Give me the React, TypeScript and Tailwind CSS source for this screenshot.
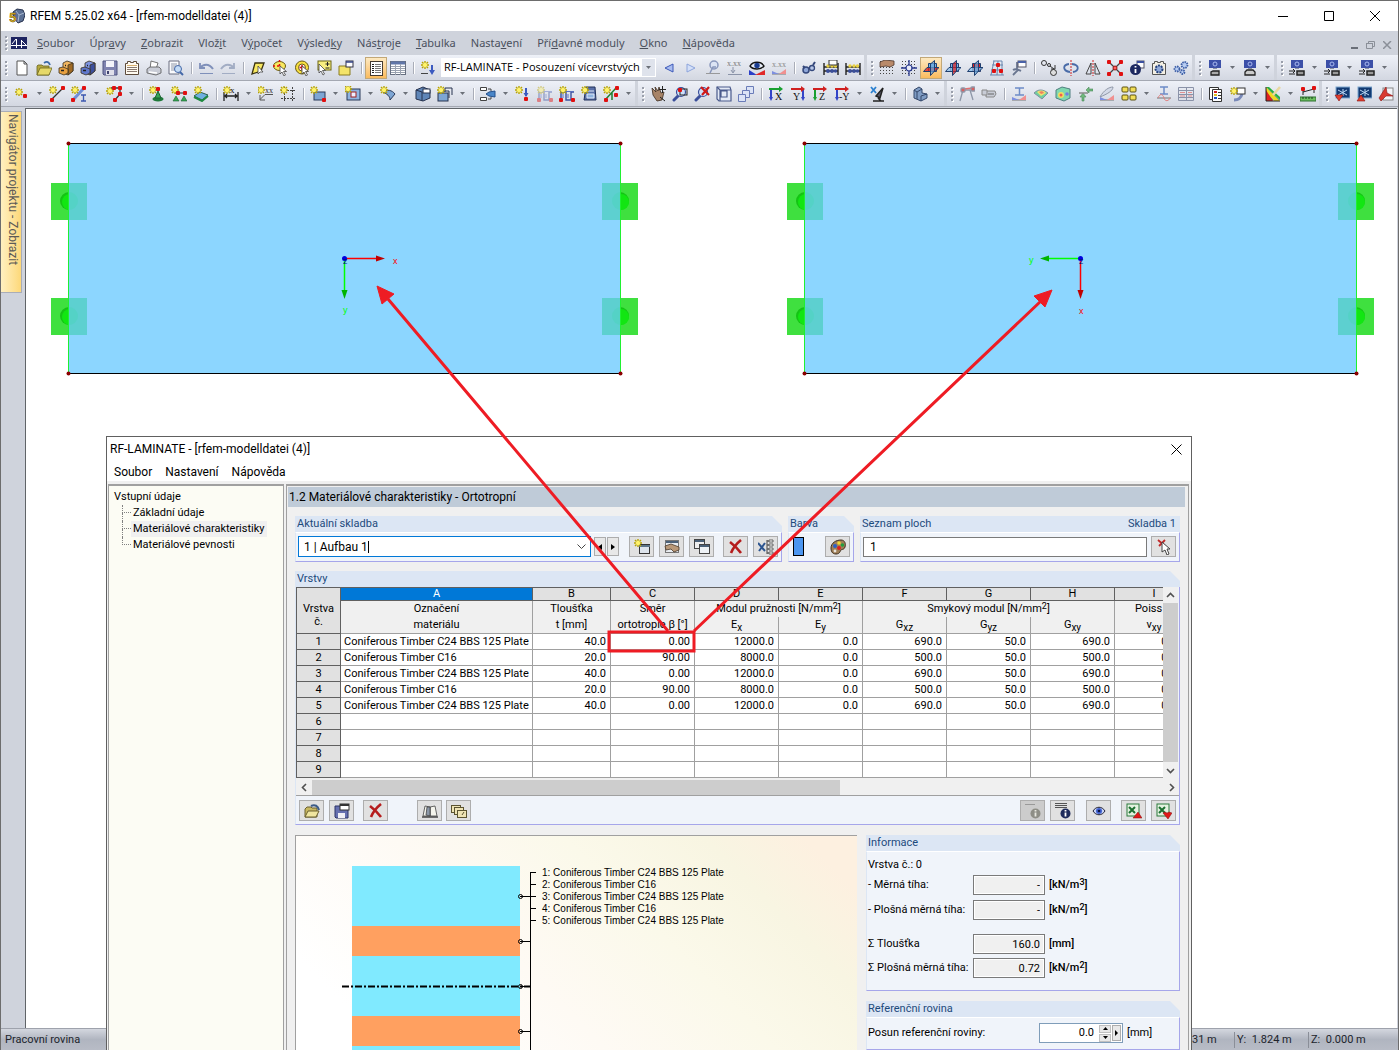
import { Fragment, type ReactNode } from "react";
import clsx from "clsx";

const dot = (x: number, y: number, c = "#e01010") => (
  <rect key={`${x}-${y}`} x={x - 2} y={y - 2} width="4" height="4" rx="1" fill={c} />
);
const star = (x = 4, y = 4) => (
  <g>
    <path
      d={`M${x} ${y - 4}v8M${x - 4} ${y}h8M${x - 3} ${y - 3}l6 6M${x + 3} ${y - 3}l-6 6`}
      stroke="#b8a400"
      strokeWidth="1.400"
    />
    <circle cx={x} cy={y} r="2.200" fill="#fff36a" />
  </g>
);
const cursor = <path d="M8 6v8l2-2 2 4 1.500-1-2-3.500h3z" fill="#fff" stroke="#444" strokeWidth=".8" />;
const txt = (x: number, y: number, s: string, c = "#333", size = 8) => (
  <text x={x} y={y} fontSize={size} fill={c} fontFamily="Liberation Serif, serif">
    {s}
  </text>
);
const xbeam = (
  <g stroke="#b9bcc4" strokeWidth="1">
    <path d="M1 14h14" stroke="#777" />
    <path d="M1 14v-3l7 3z" fill="#7d8fe0" stroke="none" />
    <path d="M15 14v-5l-7 5z" fill="#f09090" stroke="none" />
  </g>
);
const camera = (
  <g>
    <rect x="2" y="0" width="12" height="8" fill="#3c50a8" />
    <circle cx="8" cy="4" r="2" fill="none" stroke="#a9b9f0" />
    <path d="M6 8h4v1H6z" fill="#8a90a0" />
  </g>
);
const abacus = (
  <g>
    <path d="M1 3v12M15 3v12M1 7h14M1 11h14" stroke="#222" fill="none" strokeWidth="1.400" />
    <g fill="#3b4f9a">
      <circle cx="5" cy="11" r="2" />
      <circle cx="9" cy="11" r="2" />
      <circle cx="12.500" cy="11" r="1.800" />
    </g>
    <g fill="#e8d040">
      <circle cx="5" cy="6" r="1.700" />
      <circle cx="9" cy="6" r="1.700" />
      <circle cx="12.500" cy="6" r="1.700" />
    </g>
  </g>
);
const grid = (
  <path
    d="M1 1.500h15M1 4.500h15M1 7.500h15M1 10.500h15M1 13.500h15"
    stroke="#444"
    strokeDasharray="1 2"
    strokeWidth="1"
  />
);
// three crossing work planes, the active one in red
const plane = (active: "xy" | "yz" | "xz") => (
  <g strokeWidth="1" stroke="#1f3f70">
    <path d="M5.500 3.500h8v8h-8z" fill={active === "xz" ? "#e02020" : "#7ab4ea"} />
    <path d="M4 7.500h12l-4 4H.5z" fill={active === "xy" ? "#e02020" : "#8fc0ea"} fillOpacity=".8" />
    <path d="M7.500 4l4-3.500V11l-4 4.500z" fill={active === "yz" ? "#e02020" : "#6aa6dc"} fillOpacity=".7" />
  </g>
);
const cabinet = (a: string, b: string, c: string) => (
  <g stroke="#3a3020" strokeWidth=".8">
    <path d="M5 3l4-2 6 2v8l-5 4-5-2z" fill={a} />
    <path d="M10 5l5-2v8l-5 4z" fill={b} />
    <path d="M1 8l4-1 5 2v4l-4 2-5-2z" fill={c} />
    <path d="M3 10.500h3M7 5.500h1" stroke="#222" strokeWidth="1.400" />
  </g>
);
const axes = (h: string, v: string, label: string, flip = false) => (
  <g>
    <path d={flip ? "M13 3v10" : "M3 3v10"} stroke={v} strokeWidth="2" />
    <path d={flip ? "M11 11h4l-2 4z" : "M1 11h4l-2 4z"} fill={v} />
    <path d="M1 3h11" stroke={h} strokeWidth="2" />
    <path d="M11 0l4 3-4 3z" fill={h} />
    {txt(flip ? 3 : label.length > 1 ? 5 : 7, 14, label, "#111", 10)}
  </g>
);
const lens = (
  <g>
    <path d="M7 9l-5 5" stroke="#3b4f9a" strokeWidth="3" strokeLinecap="round" />
    <circle cx="9" cy="6" r="4.500" fill="#cfe0fa" stroke="#3b4f9a" strokeWidth="1.200" />
  </g>
);
const screenArrow = (d: string) => (
  <g>
    <rect x="2" y="1" width="14" height="11" fill="#123a72" stroke="#7fa8d0" />
    <path d="M4 4l9 5M13 4l-9 5M9 3v7" stroke="#bcd8f4" strokeWidth="1" />
    <path d={d} fill="#e04030" stroke="#8c1010" strokeWidth=".6" />
  </g>
);
const frame = (
  <g>
    <path d="M2 14V6h5v8h5V6h3" stroke="#3b50a0" strokeWidth="1.400" fill="none" />
    <path d="M1 5.500h14M4 8v4M9 8v4" stroke="#5a70c0" />
    {dot(2, 14)}
    {dot(14, 14)}
  </g>
);

const icons: Record<string, ReactNode> = {
  new: <path d="M3 1h7l3 3v11H3zM10 1v3h3" fill="#fff" stroke="#555" />,
  open: (
    <g stroke="#6b6420" strokeWidth=".8">
      <path d="M1 6l1-1h4l1 1h6v9H1z" fill="#b5a840" />
      <path d="M1 15l3-7h12l-3 7z" fill="#e6d96a" />
      <path d="M8 3c3-2 5-1 6 2" fill="none" stroke="#3b6aa8" strokeWidth="1.800" />
    </g>
  ),
  block: cabinet("#f0b560", "#a06a24", "#e8a040"),
  blockSave: cabinet("#7d94e0", "#3c4f9c", "#6078cc"),
  save: (
    <g>
      <path d="M1 1h14v14H2l-1-1z" fill="#8084b0" stroke="#505480" />
      <rect x="4" y="1" width="8" height="6" fill="#f4f4fa" />
      <rect x="4" y="10" width="8" height="5" fill="#e0e0ea" />
      <rect x="5" y="11" width="2" height="3" fill="#404470" />
    </g>
  ),
  print: (
    <g stroke="#555" strokeWidth=".8">
      <path d="M5 1l7 2-2 6H4z" fill="#fff" />
      <path d="M1 9l3-2h9l2 2v4l-5 2-9-2z" fill="#c9ccd6" />
      <path d="M3 12l8 1" stroke="#fff" strokeWidth="1.500" />
    </g>
  ),
  report: (
    <g>
      <path d="M1.500 3.500h2v-2h3v1h3v-1h3v2h2v11h-13z" fill="#fffaf0" stroke="#5c4a3a" />
      <path d="M3 5.500h10" stroke="#d8b070" />
      <path d="M3 7.500h10M3 9.500h10M3 11.500h10" stroke="#8a7a70" />
    </g>
  ),
  preview: (
    <g>
      <path d="M1 1h10v13H1z" fill="#fafbfd" stroke="#6a6f80" />
      <path d="M3 4h6M3 6h6M3 8h4M3 10h4" stroke="#9098a8" />
      <circle cx="10" cy="9" r="3.500" fill="#c4dcf6" stroke="#4468a8" />
      <path d="M12 12l3 3" stroke="#4468a8" strokeWidth="2" />
    </g>
  ),
  undo: (
    <g fill="none" stroke="#7f90ba">
      <path d="M2 3v5h5" strokeWidth="1.800" />
      <path d="M2 8c3-4 9-5 13 1" strokeWidth="2" />
      <path d="M2 13.500h13" />
    </g>
  ),
  redo: (
    <g fill="none" stroke="#a2adc4">
      <path d="M14 3v5H9" strokeWidth="1.800" />
      <path d="M14 8C11 4 5 3 1 9" strokeWidth="2" />
      <path d="M2 13.500h13" />
    </g>
  ),
  selPoly: (
    <g>
      <path d="M5 3h9l-3 8-9 3z" fill="#f8e860" stroke="#3a3210" strokeWidth="1.300" />
      <path d="M8 6v8l2-2h3z" fill="#fff" stroke="#444" strokeWidth=".8" />
    </g>
  ),
  selCircle: (
    <g>
      <ellipse cx="7.500" cy="6" rx="6" ry="4.500" fill="#f8e860" stroke="#6b5a10" />
      <path d="M7.500 0v8M1 6h8" stroke="#e01010" strokeWidth="1.500" strokeDasharray="2 2" />
      {cursor}
    </g>
  ),
  selRing: (
    <g>
      <circle cx="8" cy="7.500" r="6.500" fill="#f8e040" stroke="#6b5a10" />
      <circle cx="8" cy="7.500" r="3.500" fill="#fff" stroke="#6b5a10" />
      <path d="M8 5v5M5.500 7.500h5" stroke="#e01010" strokeWidth="1.500" />
      {cursor}
    </g>
  ),
  selPlus: (
    <g>
      <rect x="2" y="1" width="13" height="9" fill="#f8ee80" stroke="#6b6410" />
      <path d="M11.500 2v4M9.500 4h4M9.500 8h4" stroke="#222" />
      <path d="M3 4v9l2-2 2 4 1.500-1-2-3.500h3z" fill="#fff" stroke="#444" strokeWidth=".8" />
    </g>
  ),
  selWindow: (
    <g>
      <path d="M1 6h11v9H1z" fill="#f4e46a" stroke="#8a7c20" />
      <rect x="8" y="1" width="7" height="6" fill="#fff" stroke="#334" />
      <path d="M8 2h7" stroke="#334488" strokeWidth="1.500" />
    </g>
  ),
  navigator: (
    <g>
      <rect x="2.500" y="1.500" width="12" height="14" fill="#fff" stroke="#443a30" />
      <path d="M4 4.500h2M4 6.500h2M4 8.500h2M4 10.500h2M4 12.500h2" stroke="#222" />
      <path d="M7 4.500h6M7 6.500h6M7 8.500h6M7 10.500h6M7 12.500h6" stroke="#777" />
    </g>
  ),
  tables: (
    <g>
      <rect x=".5" y="1.500" width="15" height="13" fill="#fff" stroke="#666f80" />
      <path d="M1 3h14" stroke="#6076a8" strokeWidth="3" />
      <path d="M1 6.500h14M1 8.500h14M1 10.500h14M1 12.500h14M5.500 4v11M10.500 4v11" stroke="#9aa2b0" />
    </g>
  ),
  newLoad: (
    <g>
      {star(5, 5)}
      <path d="M12 5v7" stroke="#3b5ac0" strokeWidth="2" />
      <path d="M9 10h6l-3 5z" fill="#3b5ac0" />
      <path d="M1 13.500h7" stroke="#444" />
    </g>
  ),
  prev: <path d="M12 4v8L4 8z" fill="#a9bdf0" stroke="#3c58b8" />,
  next: <path d="M4 4v8l8-4z" fill="#d4e0f8" stroke="#8ca4dc" />,
  pin: (
    <g opacity=".8">
      <circle cx="9" cy="5" r="4" fill="#dbe4f6" stroke="#7384b0" strokeWidth="1.500" />
      <path d="M5 13l3-6h3" stroke="#7384b0" strokeWidth="1.500" fill="none" />
      <path d="M1 13.500h14" stroke="#888" />
    </g>
  ),
  values: (
    <g>
      {txt(0, 6, "x.xx", "#777", 8)}
      <path d="M6 7v5M1 14.500h14M4 10l2 3 2-3" stroke="#8a93a8" fill="none" />
    </g>
  ),
  eye: (
    <g>
      <path d="M0 15v-5l8 5z" fill="#2b3fc8" />
      <path d="M16 10v5H6z" fill="#e02828" />
      <path d="M1 6c3-5 11-5 14 0-3 4-11 4-14 0z" fill="#e6ecf8" stroke="#111" strokeWidth="1.400" />
      <circle cx="8" cy="5.500" r="2.700" fill="#1a3c90" />
    </g>
  ),
  valuesX: (
    <g>
      {xbeam}
      {txt(1, 7, "x.xx", "#888", 8)}
    </g>
  ),
  tool: (
    <g fill="none" stroke="#34487c">
      <circle cx="5" cy="10" r="3" fill="#8ea6d8" strokeWidth="1.500" />
      <circle cx="11" cy="8" r="2.500" fill="#b6c6e8" strokeWidth="1.300" />
      <path d="M2 6l2 2M12 5l2-3" strokeWidth="2" />
    </g>
  ),
  abacusWin: (
    <g>
      {abacus}
      <rect x="6" y="0" width="8" height="5" fill="#fff" stroke="#333" />
    </g>
  ),
  abacus,
  gridHand: (
    <g>
      {grid}
      <path d="M1 2l5-2 9 1v4l-4 2-4-1-6 1z" fill="#b98a6a" stroke="#4a3428" strokeWidth=".8" />
    </g>
  ),
  gridAxis: (
    <g>
      {grid}
      <path d="M8 0v16M0 8h16" stroke="#2a3a90" strokeWidth="1.300" />
      <circle cx="8" cy="8" r="3" fill="#e8ecf8" stroke="#2a3a90" strokeWidth="1.200" />
    </g>
  ),
  planeA: plane("xy"),
  planeB: plane("yz"),
  planeC: plane("xz"),
  mesh: (
    <g>
      <path d="M4 1h9M3 5h11M2 10h12M1 15h14M5 1L2 15M9 1L8 15M13 1v14" stroke="#6a88b0" fill="none" />
      {dot(9, 5)}
      {dot(5, 11)}
      {dot(12, 11)}
    </g>
  ),
  wrenchWin: (
    <g>
      <path d="M2 15l5-5M2 10c3-2 6 0 8 1M6 2v7" stroke="#6a7690" strokeWidth="1.800" fill="none" />
      <rect x="7" y="1" width="8" height="6" fill="#fff" stroke="#556" />
      <path d="M7 2h8" stroke="#4a62a8" strokeWidth="2" />
    </g>
  ),
  copyMove: (
    <g fill="none" stroke="#333">
      <circle cx="3" cy="3" r="2.500" />
      <circle cx="12.500" cy="12.500" r="3" fill="#ddd" />
      <circle cx="8" cy="5" r="1.500" />
      <path d="M9 6l4 3M14 5v4h-4" />
    </g>
  ),
  rotate: (
    <g fill="none" stroke="#4a6ca8" strokeWidth="1.800">
      <path d="M6 4C-1 5 0 11 7 12M9 4c8 1 7 7 1 8" />
      <path d="M8 0v16" stroke="#d02020" strokeDasharray="2 1" strokeWidth="1" />
    </g>
  ),
  mirror: (
    <g fill="#dfe4ee" stroke="#444">
      <path d="M6 3v11H1zM10 3v11h5z" />
      <path d="M8 0v16" stroke="#d02020" strokeDasharray="2 1" />
    </g>
  ),
  explode: (
    <g>
      <path d="M2 2l12 12M14 2L2 14" stroke="#444" strokeWidth="1.300" />
      {[dot(2, 2), dot(14, 2), dot(2, 14), dot(14, 14)]}
      <circle cx="8" cy="8" r="2" fill="#ff6060" stroke="#a01010" />
    </g>
  ),
  info: (
    <g>
      <rect x="8" y="1" width="7" height="7" fill="#fff" stroke="#556" />
      <path d="M8 2h7" stroke="#3b50a0" strokeWidth="2" />
      <circle cx="6.500" cy="9.500" r="5.500" fill="#1c2860" />
      <path d="M6.500 6v1.500M6.500 9v4" stroke="#fff" strokeWidth="1.800" />
    </g>
  ),
  settings: (
    <g>
      <path d="M1.500 3.500h2v-2h3v1h3v-1h3v2h2v11h-13z" fill="#f4f0e4" stroke="#555" />
      <circle cx="8" cy="9" r="3.500" fill="#8fa8d8" stroke="#24407c" strokeWidth="2" strokeDasharray="2 1" />
    </g>
  ),
  gears: (
    <g fill="#b8cdf2" stroke="#3e5fa6" strokeWidth="1.800" strokeDasharray="1.500 .8">
      <circle cx="4" cy="9" r="2.500" />
      <circle cx="11.500" cy="5" r="3" />
      <circle cx="9.500" cy="12" r="2" />
    </g>
  ),
  camA: (
    <g>
      {camera}
      <path d="M4 15v-3l2-1h6v4z" fill="#aaa" stroke="#222" strokeWidth="1.300" />
    </g>
  ),
  camB: (
    <g>
      {camera}
      <path d="M3 12l2-2h6l2 2v3H3z" fill="#ccc" stroke="#222" strokeWidth="1.300" />
    </g>
  ),
  camC: (
    <g>
      {camera}
      <path d="M0 11h6M0 14h6M4 9l2 2-2 2" stroke="#222" fill="none" />
      <path d="M8 11h7v4H8z" fill="#999" stroke="#222" strokeWidth="1.500" />
    </g>
  ),
  node: (
    <g>
      {star(5, 6)}
      {dot(11, 10)}
    </g>
  ),
  line: (
    <g>
      <path d="M2 14L14 2" stroke="#333" strokeWidth="1.300" />
      {star(4, 4)}
      {dot(14, 2)}
      {dot(3, 14)}
    </g>
  ),
  member: (
    <g>
      <path d="M2 14L13 2" stroke="#6f8ed8" strokeWidth="3" />
      {star(4, 4)}
      {dot(13, 2)}
      {dot(2, 14)}
      <path d="M10 9h5M10 15h5M12.500 9v6" stroke="#3c58b0" strokeWidth="1.300" />
    </g>
  ),
  polyline: (
    <g>
      <path d="M5 2h9v6l-5 6" stroke="#333" fill="none" strokeWidth="1.300" />
      {star(4, 5)}
      {[dot(8, 2), dot(14, 2), dot(14, 8), dot(9, 14)]}
    </g>
  ),
  support: (
    <g>
      {star(4, 4)}
      {dot(9, 3)}
      <ellipse cx="9" cy="13" rx="5.500" ry="2.500" fill="#1f7a3a" />
      <path d="M9 5l3 7H6z" fill="#34a853" stroke="#1c6030" />
    </g>
  ),
  lineSupport: (
    <g>
      <path d="M4 7h11" stroke="#222" />
      {star(4, 4)}
      {[dot(7, 7), dot(14, 7)]}
      <path d="M5 10l3 5H2zM13 10l3 5h-6z" fill="#34a853" stroke="#1c6030" strokeWidth=".6" />
    </g>
  ),
  surfSupport: (
    <g>
      <path d="M1 10l6-4 8 3-6 5z" fill="#6fb0e0" stroke="#2a6050" />
      <path d="M1 11l8 4 6-5" stroke="#1f8a40" strokeWidth="2" fill="none" />
      {star(5, 4)}
    </g>
  ),
  dimension: (
    <g>
      <path d="M1 6v9M15 6v9M2 10h12M4 8l-2 2 2 2M12 8l2 2-2 2" stroke="#222" fill="none" strokeWidth="1.300" />
      {star(4, 4)}
      {txt(7, 7, "x", "#111", 9)}
    </g>
  ),
  comment: (
    <g>
      <path d="M15 8.500H7l-5 5M2 9v5h5" stroke="#555" fill="none" />
      {star(3, 4)}
      {txt(7, 7, "xx", "#333", 8)}
    </g>
  ),
  guide: (
    <g>
      <path d="M4.500 1v15M12.500 1v15M1 4.500h15M1 12.500h15" stroke="#444" strokeDasharray="2 1" />
      {star(4, 4)}
    </g>
  ),
  rectSurf: (
    <g>
      <rect x="4" y="6" width="11" height="8" fill="#7ea6d4" stroke="#2a3a5a" />
      {star(4, 4)}
      {dot(14, 14)}
    </g>
  ),
  opening: (
    <g>
      <rect x="2" y="3" width="13" height="11" fill="#8fb4e0" stroke="#2a3a5a" />
      <rect x="6" y="6" width="5" height="5" fill="#eef" stroke="#a02020" />
      {star(3, 3)}
    </g>
  ),
  curved: (
    <g>
      <path d="M3 6c4-3 9-2 12 2l-5 6c0-4-3-6-7-8z" fill="#7ea6d4" stroke="#2a3a5a" />
      {star(4, 4)}
    </g>
  ),
  solid: (
    <g stroke="#27324e">
      <path d="M1 4l7-3 7 3v8l-7 3-7-2z" fill="#5f86b8" />
      <path d="M1 4l6 2v9" fill="none" />
      <rect x="8" y="3" width="7" height="4" fill="#fff" />
    </g>
  ),
  solidNew: (
    <g stroke="#27324e">
      <rect x="1" y="7" width="10" height="8" fill="#7ea6d4" />
      <path d="M8 2h7v7M8 2v4M5 5h7v7" fill="none" />
      <g stroke="none">{star(4, 4)}</g>
    </g>
  ),
  plant: (
    <g>
      <path d="M.5 1.500h6v3h-6zM.5 11.500h6v3h-6z" fill="#fff" stroke="#444" />
      <path d="M9 6l6-1v6l-6-1-3-2z" fill="#4a86c8" stroke="#24508c" />
      <path d="M8 3h3v2M8 13h3v-2" stroke="#444" fill="none" />
    </g>
  ),
  nodeLoad: (
    <g>
      {star(4, 4)}
      <path d="M11 2v8" stroke="#3b5ac0" strokeWidth="2" />
      <path d="M8.500 7h5L11 11z" fill="#3b5ac0" />
      {dot(11, 13)}
    </g>
  ),
  frameDim: (
    <g opacity=".45">
      {frame}
      {star(4, 4)}
    </g>
  ),
  frameNew: (
    <g>
      {frame}
      {star(4, 4)}
    </g>
  ),
  surfLoad: (
    <g>
      <path d="M5 1h9l1 13H3z" fill="#5a70a8" stroke="#20305a" />
      <path d="M6 5h7M6 8h7v4H6z" stroke="#dfe8f8" fill="#8fb4e0" />
      {star(4, 4)}
    </g>
  ),
  freeLoad: (
    <g>
      <path d="M2 14L13 2M9 7v7" stroke="#208030" strokeWidth="1.500" />
      {star(4, 4)}
      {[dot(14, 2), dot(3, 14), dot(13, 9)]}
    </g>
  ),
  panHand: (
    <g>
      <path d="M2 2l4 4-1-5 3 4 1-4 2 6 3-1-2 8-5 1-4-6z" fill="#a88468" stroke="#3c2c20" strokeWidth=".8" />
      <path d="M12.500 0v7M9 3.500h7M10 11l5 4" stroke="#222" />
    </g>
  ),
  zoomWin: (
    <g>
      {lens}
      <rect x="8" y="3" width="7" height="6" fill="none" stroke="#222" />
      {dot(8, 4)}
    </g>
  ),
  zoomOff: (
    <g>
      {lens}
      <path d="M7 1l8 8M15 1L8 9" stroke="#d01818" strokeWidth="2.200" />
    </g>
  ),
  box: (
    <g fill="none" stroke="#4a5a8c" strokeWidth="1.200">
      <path d="M1 1h13l1 3v11H3l-2-2z" fill="#e4eaf6" />
      <path d="M4 4h11M4 4v11M1 1l3 3M5 5h6v6H5z" />
    </g>
  ),
  boxes: (
    <g fill="#dbe3f6" stroke="#6a7cb8">
      <path d="M8.500.5h7v7h-7z" />
      <path d="M4.500 4.500h7v7h-7z" />
      <path d="M.5 8.500h7v7h-7z" />
    </g>
  ),
  axX: axes("#18a030", "#3344c8", "X"),
  axY: axes("#d02020", "#3344c8", "Y", true),
  axZ: axes("#d02020", "#18a030", "Z"),
  axMY: axes("#d02020", "#3344c8", "-Y"),
  probe: (
    <g>
      <path d="M2 1l5 6M7 1L2 7" stroke="#2a80d0" strokeWidth="1.800" />
      <path d="M14 2L7 10l4 2zM4 15h11M9 12l3 3" stroke="#222" fill="#556" strokeWidth="1.500" />
    </g>
  ),
  render: (
    <g stroke="#35486a">
      <path d="M2 4l5-3 3 2v4l5 1v4l-6 3-7-3z" fill="#7f9cc4" />
      <path d="M2 4l3 2v7M5 6l5-3M9 15v-5l6-2" fill="none" />
    </g>
  ),
  frameRed: (
    <g fill="none" stroke="#8e97a8" strokeWidth="1.300">
      <path d="M1 15L4 4h7l3 10" />
      <path d="M5 3l9-1" stroke="#e07070" />
      {dot(4, 4, "#d86060")}
      {dot(14, 3, "#d86060")}
    </g>
  ),
  capsule: (
    <g>
      <path d="M1 4h5v5H1zM6 5h8l1 3-2 3H5V9" fill="#c8ccd6" stroke="#888" />
      <path d="M7 8h6" stroke="#666" />
    </g>
  ),
  beamI: (
    <g>
      {xbeam}
      <path d="M4 2h9M4 9h9M8.500 2v7" stroke="#6d8cc8" strokeWidth="1.500" />
    </g>
  ),
  rainbow: (
    <g>
      <path d="M1 7c4-4 9-4 14 0l-6 6z" fill="#6fd0a0" stroke="#8090a0" />
      <path d="M4 6c3-2 7-2 9 1l-5 3z" fill="#f0e070" />
      <path d="M6 6c2-1 4-1 5 1l-3 1z" fill="#f08060" />
    </g>
  ),
  cubeColor: (
    <g>
      <path d="M1 4l6-3 8 2v9l-6 3-8-3z" fill="#80d8b0" stroke="#508080" />
      <circle cx="6" cy="9" r="3" fill="#f0e060" />
      <circle cx="6" cy="9" r="1.500" fill="#f06050" />
      <circle cx="12" cy="8" r="1.800" fill="#7080e0" />
    </g>
  ),
  reaction: (
    <g fill="#6fb87c" stroke="#4c8c5a" strokeWidth=".6">
      <path d="M5 15v-4H3l3-4 3 4H7v4zM9 4l3-3v2h4v2h-4v2z" />
      <path d="M2 7h9" stroke="#888" strokeWidth="1.500" />
    </g>
  ),
  smooth: (
    <g>
      {xbeam}
      <path d="M1 11C5 4 10 1 14 1c0 4-6 7-13 10z" fill="#d4dae8" stroke="#9098a8" />
    </g>
  ),
  panels: (
    <g fill="#f2de58" stroke="#5a5010">
      <rect x="1" y="1" width="6" height="5" rx="1" />
      <rect x="9" y="1" width="6" height="5" rx="1" />
      <rect x="1" y="9" width="6" height="5" rx="1" />
      <rect x="9" y="9" width="6" height="5" rx="1" />
    </g>
  ),
  section: (
    <g>
      <path d="M4 1h8M4 8h8M8 1v7" stroke="#6d8cc8" strokeWidth="1.500" />
      <path d="M1 12h14" stroke="#777" />
      <path d="M2 12c2-5 5-4 6 0 1 4 5 3 6 0" stroke="#e08080" fill="none" />
    </g>
  ),
  tableGrid: (
    <g fill="none" stroke="#8a92a8">
      <path d="M.5 1.500h15v13H.5zM1 4.500h14M1 8.500h14M1 11.500h14M8.500 1v14" />
      <path d="M2 6.500h5M10 6.500h4M2 10h5M10 10h4" stroke="#e09090" />
    </g>
  ),
  legend: (
    <g>
      <path d="M1.500 1.500h9v12h-9z" fill="#fff" stroke="#333" />
      <path d="M4.500 3.500h9v12h-9z" fill="#fff" stroke="#333" />
      <path d="M6 6h3" stroke="#d02020" strokeWidth="2" />
      <path d="M6 9h3" stroke="#e0c020" strokeWidth="2" />
      <path d="M6 12h3" stroke="#2050c0" strokeWidth="2" />
      <path d="M10 6.500h3M10 9.500h3M10 12.500h3" stroke="#333" />
    </g>
  ),
  newWin: (
    <g>
      <path d="M4 14c5 0 7-2 8-6" stroke="#7a8ab8" strokeWidth="3" fill="none" />
      <rect x="7" y="2" width="8" height="6" fill="#fff" stroke="#333" />
      {star(4, 5)}
    </g>
  ),
  colors: (
    <g>
      <path d="M1 1l14 13H1z" fill="#2060d0" />
      <path d="M1 1h3l11 10v3z" fill="#28b040" />
      <path d="M1 1v5l8 9h6z" fill="#f0d820" />
      <path d="M1 4v11h7z" fill="#e02020" />
      <path d="M15 1L8 9" stroke="#e8d8a0" strokeWidth="2.500" />
      <path d="M1 1v14h14" stroke="#222" fill="none" />
    </g>
  ),
  ruler: (
    <g>
      <path d="M3 6l11-3M3 2v7M14 1v6" stroke="#222" />
      {dot(3, 3)}
      {dot(14, 2)}
      <rect x="0" y="11" width="16" height="4" fill="#6cc060" stroke="#2f7030" />
      <path d="M3 11v2M6 11v2M9 11v2M12 11v2" stroke="#164018" />
    </g>
  ),
  impDown: screenArrow("M1 9h8l-4 6z"),
  impUp: screenArrow("M1 15h8l-4-6z"),
  pdf: (
    <g>
      <rect x="5" y="2" width="10" height="12" fill="#f2f4f8" stroke="#888" />
      <path d="M1 12L8 1l1 6 6 3-7 0-5 5z" fill="#d83a30" stroke="#8c1010" strokeWidth=".6" />
    </g>
  ),
  // dialog icons
  winNew: (
    <g>
      <rect x="5.500" y="5.500" width="10" height="9" fill="#dde4ec" stroke="#333" />
      <path d="M5 7h11" stroke="#5c7488" strokeWidth="2" />
      {star(4, 4)}
    </g>
  ),
  winHand: (
    <g>
      <rect x="1.500" y="1.500" width="13" height="12" fill="#e8ecf0" stroke="#777" />
      <path d="M2 3h12" stroke="#4a6078" strokeWidth="2" />
      <path d="M1 7l6-2 8 3v3l-5 2-3-3-5 1z" fill="#b89878" stroke="#4a3828" strokeWidth=".8" />
    </g>
  ),
  winCopy: (
    <g stroke="#444">
      <rect x=".5" y=".5" width="10" height="9" fill="#eee" />
      <path d="M1 2h9" stroke="#4a6078" strokeWidth="2" />
      <rect x="5.500" y="5.500" width="10" height="9" fill="#eef2f6" />
      <path d="M6 7h9" stroke="#4a6078" strokeWidth="2" />
    </g>
  ),
  del: <path d="M2 3c4 3 8 7 11 11M13 1C8 5 5 9 3 14" stroke="#b51c1c" strokeWidth="2.600" fill="none" />,
  delAll: (
    <g>
      <path d="M0 4l7 8M7 4l-6 8" stroke="#2c5590" strokeWidth="2" />
      <path d="M9 1v14M9 2h2M9 6h2M9 10h2M9 14h2" stroke="#444" />
      <path d="M11 1h4v2h-4zM11 5h4v2h-4zM11 9h4v2h-4zM11 13h4v2h-4z" fill="#fff" stroke="#444" strokeWidth=".8" />
    </g>
  ),
  palette: (
    <g>
      <path d="M1 9c0-5 5-8 10-8 4 0 5 4 4 7s-3 2-4 3-1 4-5 4-5-3-5-6z" fill="#a08058" stroke="#3c2c1c" />
      <circle cx="5" cy="7" r="2" fill="#2a60c8" />
      <circle cx="9" cy="4" r="1.800" fill="#f0d830" />
      <circle cx="12.500" cy="6" r="1.700" fill="#20a040" />
      <circle cx="9" cy="9" r="2" fill="#d82020" />
      <circle cx="5" cy="12" r="1.400" fill="#e8e4dc" />
    </g>
  ),
  pick: (
    <g>
      <path d="M2 1l7 6M9 1L3 7" stroke="#c02828" strokeWidth="1.800" />
      <path d="M6 3v10l3-2 2 5 2-1-2-5h3z" fill="#fff" stroke="#444" />
    </g>
  ),
  folder: (
    <g>
      <path d="M1 6l2-2h4l1 1h5v9H1z" fill="#c8b860" stroke="#6b6030" />
      <path d="M1 14l3-6h11l-3 6z" fill="#f0e6a0" stroke="#6b6030" />
      <path d="M7 3c4-2 7 0 8 4" stroke="#3c5c88" strokeWidth="2" fill="none" />
    </g>
  ),
  disk: (
    <g>
      <path d="M1 3h13v12H2l-1-1z" fill="#6670b0" stroke="#2c3468" />
      <rect x="4" y="10" width="7" height="5" fill="#f0f0f6" />
      <rect x="6" y="1" width="9" height="6" fill="#fff" stroke="#333" />
      <path d="M6 2h9" stroke="#333" strokeWidth="2" />
    </g>
  ),
  book: (
    <g stroke="#444" strokeWidth=".8">
      <path d="M1 13l2-10 5 1v9zM15 13L13 3 8 4v9z" fill="#f4f4ec" />
      <path d="M8 4v9l-4-1 1-8z" fill="#8c98a8" />
      <path d="M0 14h16" strokeWidth="1.500" />
    </g>
  ),
  stack: (
    <g fill="#efe4b4" stroke="#5c5430">
      <rect x=".5" y="2.500" width="9" height="7" />
      <rect x="3.500" y="4.500" width="9" height="7" />
      <rect x="6.500" y="7.500" width="9" height="7" />
      <path d="M11 12l2-3" />
    </g>
  ),
  infoRow: (
    <g>
      <path d="M0 1.500h10" stroke="#999" />
      <circle cx="10.500" cy="10.500" r="5" fill="#8e8e86" />
      <path d="M10.500 7v1.500M10.500 9.500v4" stroke="#e8e8e0" strokeWidth="1.800" />
    </g>
  ),
  infoAll: (
    <g>
      <path d="M0 .5h12M0 2.500h12M0 4.500h12" stroke="#555" />
      <circle cx="10.500" cy="10.500" r="5" fill="#1e2c5c" />
      <path d="M10.500 7v1.500M10.500 9.500v4" stroke="#fff" strokeWidth="1.800" />
    </g>
  ),
  view: (
    <g>
      <path d="M2 8c3-5 9-5 12 0-3 5-9 5-12 0z" fill="#c8d4f4" stroke="#223" />
      <circle cx="8" cy="8" r="3" fill="#4060d0" />
      <circle cx="8" cy="8" r="1.300" fill="#0c1440" />
    </g>
  ),
  xlsUp: (
    <g>
      <rect x="1" y="1" width="12" height="12" fill="#e4f2e0" stroke="#2c7a3c" />
      <path d="M3 4l6 6M9 4l-6 6" stroke="#1c7030" strokeWidth="2" />
      <path d="M7 15h9l-4-6z" fill="#e01818" stroke="#801010" strokeWidth=".5" />
    </g>
  ),
  xlsDown: (
    <g>
      <rect x="1" y="1" width="12" height="12" fill="#e4f2e0" stroke="#2c7a3c" />
      <path d="M3 4l6 6M9 4l-6 6" stroke="#1c7030" strokeWidth="2" />
      <path d="M7 10l2-1 2 1 2-1 3 1-4 6z" fill="#e01818" stroke="#801010" strokeWidth=".5" />
    </g>
  ),
};

function Icon({ name }: { name: string }) {
  return (
    <svg width="16" height="16" viewBox="0 0 16 16" fill="none" aria-hidden="true">
      {icons[name]}
    </svg>
  );
}

// "|" separator, "v" drop-down arrow, "#" start of the next toolbar, "*" prefix = pressed
const row1a = "new open block blockSave save report print preview | undo redo | selPoly selCircle selRing selPlus selWindow | *navigator tables | newLoad";
const row1b = "prev next pin values eye valuesX | tool abacusWin abacus # gridHand gridAxis *planeA planeB planeC mesh wrenchWin | copyMove rotate mirror explode info settings gears # camA v camB v # camC v camC v camC v";
const row2 = "node v line member v polyline v | support lineSupport surfSupport | dimension v comment guide | rectSurf v opening v curved v solid solidNew v | plant v nodeLoad frameDim frameNew surfLoad freeLoad v # panHand zoomWin zoomOff box boxes | axX axY axZ axMY v probe v | render v # frameRed capsule | beamI rainbow cubeColor reaction smooth panels v section tableGrid | legend newWin v colors v ruler # impDown impUp pdf";

function Grip() {
  return (
    <span className="flex w-[3px] flex-col gap-[2px]">
      {[0, 1, 2, 3].map((i) => (
        <span key={i} className="h-[2px] w-[2px] bg-[#9a9fab] shadow-[1px_1px_0_#ffffff]" />
      ))}
    </span>
  );
}

function Tools({ items }: { items: string }) {
  return (
    <>
      {items.split(" ").map((item, i) => {
        if (item === "|")
          return (
            <span key={i} className="flex w-2 shrink-0 justify-center">
              <span className="h-3 w-px bg-[#a9adb8] shadow-[1px_0_0_#ffffff]" />
            </span>
          );
        if (item === "#")
          return (
            <span key={i} className="flex h-full w-3 shrink-0 items-center gap-1">
              <span className="h-full w-[3px] bg-[#cfd3dc]" />
              <Grip />
            </span>
          );
        if (item === "v")
          return (
            <button key={i} aria-label="Další" className="flex h-[22px] w-[13px] shrink-0 items-center justify-center">
              <svg width="5" height="3" aria-hidden="true">
                <path d="M0 0h5L2.500 3z" fill="#6b7078" />
              </svg>
            </button>
          );
        const on = item.startsWith("*");
        const name = on ? item.slice(1) : item;
        return (
          <button
            key={i}
            aria-label={name}
            className={clsx(
              "flex h-[22px] w-[22px] shrink-0 items-center justify-center",
              on && "border border-[#c2a878] bg-gradient-to-b from-[#fde9c0] to-[#fbbb5c]"
            )}
          >
            <Icon name={name} />
          </button>
        );
      })}
    </>
  );
}

const menus: [string, string, string][] = [
  ["", "S", "oubor"],
  ["Úpr", "a", "vy"],
  ["", "Z", "obrazit"],
  ["Vlož", "i", "t"],
  ["V", "ý", "počet"],
  ["Výsled", "k", "y"],
  ["Nás", "t", "roje"],
  ["", "T", "abulka"],
  ["Nasta", "v", "ení"],
  ["Pří", "d", "avné moduly"],
  ["", "O", "kno"],
  ["", "N", "ápověda"],
];

function Plate({ x }: { x: number }) {
  const supports = [
    [x, 201],
    [x, 316],
    [x + 551, 201],
    [x + 551, 316],
  ];
  return (
    <g>
      {supports.map(([cx, cy]) => (
        <g key={`${cx}-${cy}`}>
          <rect x={cx - 18} y={cy - 18} width="36" height="37" fill="#3fe03f" />
          <circle cx={cx} cy={cy} r="9" fill="#14c414" />
          <circle cx={cx + 1} cy={cy + 1} r="8" fill="#12e612" />
        </g>
      ))}
      <rect x={x} y="143" width="552" height="230" fill="#8cd6ff" />
      {supports.map(([cx, cy]) => (
        <g key={`${cx}-${cy}`}>
          <rect x={cx === x ? cx : cx - 18} y={cy - 18} width="18" height="37" fill="#5dd0d0" />
          <path
            d={cx === x ? `M${cx} ${cy - 9}a9 9 0 0 1 0 18z` : `M${cx + 1} ${cy - 9}a9 9 0 0 0 0 18z`}
            fill="#54d2c6"
          />
        </g>
      ))}
      <path d={`M${x - 0.5} 143v230M${x + 551.5} 143v230`} stroke="#20f030" />
      <path d={`M${x} 143.500h552M${x} 373.500h552`} stroke="#000" />
      {[x - 0.5, x + 551.5].map((px) =>
        [143.5, 373.5].map((py) => <circle key={`${px}-${py}`} cx={px} cy={py} r="2" fill="#8b0000" />)
      )}
    </g>
  );
}

function Model() {
  return (
    <svg className="block h-full w-full" aria-label="Model">
      <g transform="translate(-26 -109)" fontFamily="Liberation Sans, sans-serif" fontSize="9">
        <Plate x={69} />
        <Plate x={805} />
        <path d="M344 258.500h34" stroke="#f00" strokeWidth="1.500" />
        <path d="M376 255.500l9 3-9 3z" fill="#c00000" />
        <path d="M344.500 258v34" stroke="#0f0" strokeWidth="1.500" />
        <path d="M341.500 290l3 9 3-9z" fill="#00b400" />
        <circle cx="344.500" cy="258.500" r="2.500" fill="#0000e0" />
        <text x="343" y="264" fill="#001080">z</text>
        <text x="393" y="264" fill="#f00">x</text>
        <text x="343" y="313" fill="#0f0">y</text>
        <path d="M1080 258.500h-34" stroke="#0f0" strokeWidth="1.500" />
        <path d="M1049 255.500l-9 3 9 3z" fill="#00b400" />
        <path d="M1080.500 258v34" stroke="#f00" strokeWidth="1.500" />
        <path d="M1077.500 290l3 9 3-9z" fill="#c00000" />
        <circle cx="1080.500" cy="258.500" r="2.500" fill="#0000e0" />
        <text x="1079" y="264" fill="#001080">z</text>
        <text x="1029" y="263" fill="#0f0">y</text>
        <text x="1079" y="314" fill="#f00">x</text>
      </g>
    </svg>
  );
}

function Group({ title, right, line = true, className, children }: {
  title: string;
  right?: string;
  line?: boolean;
  className?: string;
  children: ReactNode;
}) {
  return (
    <section className={clsx("flex min-w-0 flex-col", className)}>
      <h3
        className={clsx(
          "flex h-4 shrink-0 items-center justify-between bg-[#dce6f4] pl-[2px] pr-1 pt-px text-[11px] text-[#1c4a7c]",
          !right && "[clip-path:polygon(0_0,calc(100%-10px)_0,100%_10px,100%_100%,0_100%)]"
        )}
      >
        <span>{title}</span>
        {right && <span>{right}</span>}
      </h3>
      <div
        className={clsx(
          "flex-1 border-b border-l border-r border-b-[#a6a6ea] border-l-[#dce6f4] border-r-[#a6a6ea] bg-[#f0f4fa]",
          line && "border-t border-t-white"
        )}
      >
        {children}
      </div>
    </section>
  );
}

function Btn({ name, label, disabled, className }: { name: string; label: string; disabled?: boolean; className?: string }) {
  return (
    <button
      aria-label={label}
      disabled={disabled}
      className={clsx(
        "flex h-[21px] w-[25px] shrink-0 items-center justify-center border border-[#adadad]",
        disabled ? "bg-[#cccccc]" : "bg-[#e1e1e1]",
        className
      )}
    >
      <Icon name={name} />
    </button>
  );
}

const timber = ["Coniferous Timber C24 BBS 125 Plate", "Coniferous Timber C16"];
const layers = [0, 1, 0, 1, 0].map((k) =>
  k === 0
    ? [timber[0], "40.0", "0.00", "12000.0", "0.0", "690.0", "50.0", "690.0", "0.200"]
    : [timber[1], "20.0", "90.00", "8000.0", "0.0", "500.0", "50.0", "500.0", "0.200"]
);
const letters = ["A", "B", "C", "D", "E", "F", "G", "H", "I"];

function Sup({ children }: { children: ReactNode }) {
  return <sup className="-top-[3px] text-[9px]">{children}</sup>;
}

function LayerTable() {
  const head = "border-r border-[#a0a0a0] p-0 font-normal";
  return (
    <table className="w-[898px] table-fixed border-separate border-spacing-0 text-[11px] leading-[14px]">
      <colgroup>
        <col className="w-[45px]" />
        <col className="w-[192px]" />
        <col className="w-[78px]" />
        <col span={6} className="w-[84px]" />
        <col className="w-[79px]" />
      </colgroup>
      <thead className="bg-[#f0f0f0]">
        <tr className="h-[14px]">
          <th rowSpan={3} className="border border-[#606060] bg-[#e1e1e1] p-0 pt-2 font-normal leading-[13px]">
            Vrstva
            <br />
            č.
          </th>
          {letters.map((l) => (
            <th
              key={l}
              className={clsx(
                "h-[14px] border-b border-r border-t border-[#606060] p-0 font-normal leading-[12px]",
                l === "A" ? "bg-[#0078d7] text-white" : "bg-[#e1e1e1]"
              )}
            >
              {l}
            </th>
          ))}
        </tr>
        <tr className="h-4">
          <th className={head}>Označení</th>
          <th className={head}>Tloušťka</th>
          <th className={head}>Směr</th>
          <th className={head} colSpan={2}>
            Modul pružnosti [N/mm<Sup>2</Sup>]
          </th>
          <th className={head} colSpan={3}>
            Smykový modul [N/mm<Sup>2</Sup>]
          </th>
          <th className={clsx(head, "pl-5 text-left")}>Poiss</th>
        </tr>
        <tr className="h-[17px]">
          {["materiálu", "t [mm]", "ortotropie β [°]"].map((t) => (
            <th key={t} className={clsx(head, "border-b")}>
              {t}
            </th>
          ))}
          {[
            ["E", "x"],
            ["E", "y"],
            ["G", "xz"],
            ["G", "yz"],
            ["G", "xy"],
            ["ν", "xy"],
          ].map(([a, b]) => (
            <th key={a + b} className={clsx(head, "border-b")}>
              {a}
              <sub className="text-[10px]">{b}</sub>
            </th>
          ))}
        </tr>
      </thead>
      <tbody className="bg-white">
        {[0, 1, 2, 3, 4, 5, 6, 7, 8].map((r) => (
          <tr key={r} className="h-4">
            <th className="h-4 border-b border-l border-r border-[#606060] bg-[#e1e1e1] p-0 font-normal">{r + 1}</th>
            {letters.map((l, c) => (
              <td
                key={l}
                className={clsx(
                  "border-b border-r border-[#a0a0a0] p-0 pt-px",
                  c === 0 ? "whitespace-nowrap pl-[3px]" : "pr-1 text-right"
                )}
              >
                {layers[r]?.[c]}
              </td>
            ))}
          </tr>
        ))}
      </tbody>
    </table>
  );
}

function Chevron({ d }: { d: string }) {
  return (
    <svg width="9" height="9" viewBox="0 0 9 9" fill="none" aria-hidden="true">
      <path d={d} stroke="#505050" strokeWidth="1.600" />
    </svg>
  );
}

function Diagram() {
  const bands = [
    [30, 60, "#80eaff"],
    [90, 30, "#ffa060"],
    [120, 60, "#80eaff"],
    [180, 30, "#ffa060"],
    [210, 60, "#80eaff"],
  ] as const;
  return (
    <svg className="block h-full w-full" aria-label="Skladba vrstev">
      {bands.map(([y, h, c]) => (
        <rect key={y} x="56" y={y} width="168" height={h} fill={c} />
      ))}
      <path d="M46 150.500h188" stroke="#000" strokeWidth="2" strokeDasharray="7 2 2 2" />
      <path d="M234.500 36v260" stroke="#000" />
      {[0, 1, 2, 3, 4].map((i) => (
        <Fragment key={i}>
          <path d={`M234 ${36.5 + i * 12}h6`} stroke="#000" />
          <text x="246" y={40 + i * 12} fontSize="10" fontFamily="Liberation Sans, sans-serif">
            {`${i + 1}: ${timber[i % 2]}`}
          </text>
        </Fragment>
      ))}
      {[60.5, 105.5, 150.5, 195.5].map((y) => (
        <g key={y} fill="none" stroke="#000">
          <path d={`M224 ${y}h10`} />
          <circle cx="224.500" cy={y} r="2" />
        </g>
      ))}
    </svg>
  );
}

function InfoRow({ id, label, value, unit, exp, className }: {
  id: string;
  label: string;
  value: string;
  unit: string;
  exp?: string;
  className?: string;
}) {
  return (
    <div className={clsx("flex h-5 items-center", className)}>
      <label htmlFor={id} className="w-[105px] shrink-0 whitespace-nowrap pt-px">
        {label}
      </label>
      <input
        id={id}
        readOnly
        defaultValue={value}
        className="h-5 w-[72px] border border-[#7a7a7a] bg-[#f0f0f0] pr-1 text-right outline-1 -outline-offset-2 outline-white"
      />
      <span className="pl-1 pt-px font-medium">
        [{unit}
        {exp && <Sup>{exp}</Sup>}]
      </span>
    </div>
  );
}

function Dialog() {
  return (
    <div
      role="dialog"
      aria-label="RF-LAMINATE"
      className="absolute bottom-0 left-[105px] right-[206px] top-[435px] flex flex-col overflow-hidden border-l border-r border-t border-[#606060] bg-white font-['Roboto',sans-serif] text-[11px] text-black"
    >
      <div className="flex h-6 shrink-0 items-center justify-between pl-[3px] pr-[9px] text-xs">
        <span>RF-LAMINATE - [rfem-modelldatei (4)]</span>
        <button aria-label="Zavřít">
          <svg width="11" height="11" aria-hidden="true">
            <path d="M.5.5l10 10M10.500.5l-10 10" stroke="#000" />
          </svg>
        </button>
      </div>
      <nav className="flex h-5 shrink-0 items-center gap-[13px] pl-[7px] pt-[2px] text-xs">
        <button>Soubor</button>
        <button>Nastavení</button>
        <button>Nápověda</button>
      </nav>
      <div className="h-[3px] shrink-0 bg-[#f0f0f0]" />
      <div className="flex min-h-0 flex-1 gap-[2px] bg-[#f0f0f0] pl-px pr-[2px]">
        <div className="w-[176px] shrink-0 border-l border-r border-t-2 border-[#a0a0a0] bg-[#fcfcf4] pl-[5px] pt-[3px] leading-4">
          <div>Vstupní údaje</div>
          <ul className="ml-2">
            {["Základní údaje", "Materiálové charakteristiky", "Materiálové pevnosti"].map((t, i) => (
              <li key={t} className="flex h-4">
                <span className="flex w-[9px] flex-col">
                  <span className="h-2 border-b border-l border-dotted border-[#808080]" />
                  {i < 2 && <span className="h-2 border-l border-dotted border-[#808080]" />}
                </span>
                <a href="#" className={clsx("px-[2px]", i === 1 && "bg-[#f0f0f0]")}>
                  {t}
                </a>
              </li>
            ))}
          </ul>
        </div>
        <div className="flex min-w-0 flex-1 flex-col border-l border-r border-t-2 border-[#a0a0a0] pt-px">
          <h2 className="ml-px mr-[3px] flex h-5 shrink-0 items-center bg-[#bfcbd8] pl-px text-xs">
            1.2 Materiálové charakteristiky - Ortotropní
          </h2>
          <div className="flex min-h-0 flex-1 flex-col gap-[9px] pl-2 pr-2 pt-[9px]">
            <div className="flex shrink-0 gap-[6px]">
              <Group title="Aktuální skladba" className="flex-1">
                <div className="flex items-center pb-1 pl-[2px] pr-[3px] pt-[3px]">
                  <div className="flex h-[21px] min-w-0 flex-1 items-center border border-[#0078d7] bg-white pl-[5px] pr-1 text-xs">
                    <input
                      aria-label="Aktuální skladba"
                      defaultValue="1 | Aufbau 1"
                      className="min-w-0 [field-sizing:content] outline-none"
                    />
                    <span className="h-3 w-px bg-black" />
                    <button aria-label="Otevřít seznam" className="ml-auto">
                      <svg width="9" height="5" fill="none" aria-hidden="true">
                        <path d="M.5.5l4 4 4-4" stroke="#444" />
                      </svg>
                    </button>
                  </div>
                  <button aria-label="Předchozí" className="ml-[3px] flex h-[19px] w-3 items-center justify-center border border-[#adadad] bg-[#e8e8e8]">
                    <svg width="4" height="6" aria-hidden="true">
                      <path d="M4 0v6L0 3z" />
                    </svg>
                  </button>
                  <button aria-label="Následující" className="ml-px flex h-[19px] w-3 items-center justify-center border border-[#adadad] bg-[#e8e8e8]">
                    <svg width="4" height="6" aria-hidden="true">
                      <path d="M0 0v6l4-3z" />
                    </svg>
                  </button>
                  <Btn name="winNew" label="Nová skladba" className="ml-[10px]" />
                  <Btn name="winHand" label="Přejmenovat" className="ml-[5px]" />
                  <Btn name="winCopy" label="Kopírovat" className="ml-[5px]" />
                  <Btn name="del" label="Smazat" className="ml-[9px]" />
                  <Btn name="delAll" label="Smazat vše" className="ml-[5px]" />
                </div>
              </Group>
              <Group title="Barva" className="w-[66px]">
                <div className="flex items-center justify-between pb-1 pl-1 pr-[3px] pt-[3px]">
                  <span className="h-[19px] w-[11px] border border-black bg-[#4c96f0]" />
                  <Btn name="palette" label="Barva" />
                </div>
              </Group>
              <Group title="Seznam ploch" right="Skladba 1" className="w-[320px]">
                <div className="flex items-center gap-1 pb-1 pl-[2px] pr-[3px] pt-[3px]">
                  <input
                    aria-label="Seznam ploch"
                    defaultValue="1"
                    className="h-5 min-w-0 flex-1 border border-[#7a7a7a] bg-white px-[6px] text-xs"
                  />
                  <Btn name="pick" label="Vybrat plochy" />
                </div>
              </Group>
            </div>

            <Group title="Vrstvy" line={false} className="shrink-0">
              <div className="flex pr-px">
                <div className="min-w-0 flex-1 overflow-hidden">
                  <LayerTable />
                </div>
                <div className="flex w-[15px] flex-col items-center bg-[#f0f0f0]">
                  <button aria-label="Nahoru" className="flex h-4 items-center">
                    <Chevron d="M1 6l3.500-3.500L8 6" />
                  </button>
                  <span className="w-full flex-1 bg-[#cdcdcd]" />
                  <button aria-label="Dolů" className="flex h-4 items-center">
                    <Chevron d="M1 3l3.500 3.500L8 3" />
                  </button>
                </div>
              </div>
              <div className="flex h-[18px] items-center border-b border-[#a0a0a0] bg-[#f0f0f0] pt-px">
                <button aria-label="Vlevo" className="flex w-4 justify-center">
                  <Chevron d="M6 1L2.500 4.500 6 8" />
                </button>
                <span className="flex h-[15px] flex-1">
                  <span className="w-[62%] bg-[#cdcdcd]" />
                </span>
                <button aria-label="Vpravo" className="flex w-4 justify-center">
                  <Chevron d="M3 1l3.500 3.500L3 8" />
                </button>
              </div>
              <div className="flex pb-[3px] pl-[3px] pr-[3px] pt-1">
                <Btn name="folder" label="Načíst" />
                <Btn name="disk" label="Uložit" className="ml-[5px]" />
                <Btn name="del" label="Smazat vrstvy" className="ml-[9px]" />
                <Btn name="book" label="Knihovna" className="ml-[29px]" />
                <Btn name="stack" label="Vrstvy" className="ml-1" />
                <Btn name="infoRow" label="Info o vrstvě" disabled className="ml-auto" />
                <Btn name="infoAll" label="Info o vrstvách" className="ml-[5px]" />
                <Btn name="view" label="Zobrazit" className="ml-[11px]" />
                <Btn name="xlsUp" label="Export" className="ml-[10px]" />
                <Btn name="xlsDown" label="Import" className="ml-[5px]" />
              </div>
            </Group>

            <div className="flex min-h-0 flex-1 gap-[9px] pt-px">
              <div className="min-w-0 flex-1 border-l border-t border-[#a0a0a0] bg-[linear-gradient(45deg,#ffffff_12%,#fefaf4_40%,#fbf9ea_62%,#f8f5e2_80%,#fdf0e0_93%)]">
                <Diagram />
              </div>
              <div className="flex w-[314px] shrink-0 flex-col gap-[10px]">
                <Group title="Informace" className="shrink-0">
                  <div className="pb-3 pl-px pt-[3px]">
                    <p className="mb-[2px] h-[18px] leading-5">Vrstva č.: 0</p>
                    <InfoRow id="weight" label="- Měrná tíha:" value="-" unit="kN/m" exp="3" />
                    <InfoRow id="areaWeight" label="- Plošná měrná tíha:" value="-" unit="kN/m" exp="2" className="mt-[5px]" />
                    <InfoRow id="thickness" label="Σ Tloušťka" value="160.0" unit="mm" className="mt-[14px]" />
                    <InfoRow id="total" label="Σ Plošná měrná tíha:" value="0.72" unit="kN/m" exp="2" className="mt-1" />
                  </div>
                </Group>
                <Group title="Referenční rovina" className="min-h-0 flex-1">
                  <div className="flex items-center pl-px pt-[5px]">
                    <label htmlFor="offset">Posun referenční roviny:</label>
                    <div className="ml-auto flex h-5 w-[84px] items-center gap-px border border-[#7f9db9] bg-white pr-px">
                      <input id="offset" defaultValue="0.0" className="min-w-0 flex-1 pr-1 text-right outline-none" />
                      <span className="flex w-3 flex-col gap-px">
                        <button aria-label="Zvýšit" className="flex h-2 items-center justify-center border border-[#c0c0c0] bg-[#e8e8e8]">
                          <svg width="5" height="3" aria-hidden="true">
                            <path d="M0 3h5L2.500 0z" />
                          </svg>
                        </button>
                        <button aria-label="Snížit" className="flex h-2 items-center justify-center border border-[#c0c0c0] bg-[#e8e8e8]">
                          <svg width="5" height="3" aria-hidden="true">
                            <path d="M0 0h5L2.500 3z" />
                          </svg>
                        </button>
                      </span>
                      <button aria-label="Více" className="flex h-4 w-[9px] items-center justify-center border border-[#adadad] bg-[#e8e8e8]">
                        <svg width="3" height="6" aria-hidden="true">
                          <path d="M0 0v6l3-3z" />
                        </svg>
                      </button>
                    </div>
                    <span className="w-[56px] pl-1">[mm]</span>
                  </div>
                </Group>
              </div>
            </div>
          </div>
        </div>
      </div>
    </div>
  );
}

const bar = "flex shrink-0 items-center overflow-hidden border-b border-[#a4a8b2] bg-gradient-to-b from-[#eef1f8] to-[#d3d7e1] pl-1";

export default function App() {
  return (
    <div className="relative flex h-screen flex-col overflow-hidden border-l border-r border-t border-[#6d6d6d] bg-[#cfd3dc] font-['Noto_Sans',sans-serif] text-[11px] text-[#4a505c]">
      <header className="flex h-[30px] shrink-0 items-center bg-white pl-2 font-['Roboto',sans-serif] text-xs text-black">
        <svg width="16" height="16" viewBox="0 0 16 16" aria-hidden="true">
          <path d="M4 4l4-3 6 1 2 5-2 6-5 2-4-5z" fill="#5c7094" stroke="#27324e" />
          <path d="M7 3l3 4 5-2M10 7l-1 7" stroke="#a9b8d0" fill="none" />
          <text x="0" y="14" fontSize="13" fontWeight="700" fill="#e8bc20" stroke="#5c4810" strokeWidth=".5">
            5
          </text>
        </svg>
        <span className="pl-[5px]">RFEM 5.25.02 x64 - [rfem-modelldatei (4)]</span>
        <div className="ml-auto flex items-center gap-9 pr-[18px]">
          <button aria-label="Minimalizovat">
            <svg width="10" height="10" aria-hidden="true">
              <path d="M0 5.500h10" stroke="#000" />
            </svg>
          </button>
          <button aria-label="Maximalizovat">
            <svg width="10" height="10" fill="none" aria-hidden="true">
              <path d="M.5.5h9v9h-9z" stroke="#000" />
            </svg>
          </button>
          <button aria-label="Zavřít">
            <svg width="10" height="10" aria-hidden="true">
              <path d="M0 0l10 10M10 0L0 10" stroke="#000" />
            </svg>
          </button>
        </div>
      </header>

      <nav className="flex h-6 shrink-0 items-center pl-1">
        <Grip />
        <svg width="16" height="12" viewBox="0 0 16 12" fill="none" className="ml-[3px]" aria-hidden="true">
          <path d="M0 0h16v12H0z" fill="#1e2460" />
          <path d="M0 8.500h16M5.500 2v9M1 7l4-5M10.500 3v8M10 3l5 5" stroke="#fff" />
        </svg>
        <div className="flex gap-[15px] pl-[10px]">
          {menus.map(([a, u, b]) => (
            <button key={a + u + b}>
              {a}
              <u>{u}</u>
              {b}
            </button>
          ))}
        </div>
        <div className="ml-auto flex items-end gap-2 pr-[6px] pt-1">
          <button aria-label="Minimalizovat okno">
            <svg width="7" height="8" aria-hidden="true">
              <path d="M0 7h7" stroke="#6a6f78" strokeWidth="2" />
            </svg>
          </button>
          <button aria-label="Obnovit okno">
            <svg width="9" height="8" fill="none" aria-hidden="true">
              <path d="M2.500 2V.5h6v5H7M.5 2.500h6v5h-6zM0 2.500h7" stroke="#8a8f98" />
            </svg>
          </button>
          <button aria-label="Zavřít okno">
            <svg width="9" height="8" aria-hidden="true">
              <path d="M0 0l8 8M8 0L0 8" stroke="#8a8f98" strokeWidth="1.500" />
            </svg>
          </button>
        </div>
      </nav>

      <div className={clsx(bar, "h-[26px]")}>
        <Grip />
        <span className="w-[3px] shrink-0" />
        <Tools items={row1a} />
        <span className="relative mx-[2px] flex shrink-0">
          <select
            aria-label="Zatěžovací stav"
            className="h-[19px] w-[215px] appearance-none bg-white pl-[3px] pr-3 font-['Open_Sans',sans-serif] text-black"
          >
            <option>RF-LAMINATE - Posouzení vícevrstvých</option>
          </select>
          <span className="pointer-events-none absolute bottom-px right-px top-px flex w-[13px] items-center justify-center bg-[#dfe3ec]">
            <svg width="5" height="3" aria-hidden="true">
              <path d="M0 0h5L2.500 3z" fill="#6b7078" />
            </svg>
          </span>
        </span>
        <Tools items={row1b} />
      </div>
      <div className={clsx(bar, "h-[26px]")}>
        <Grip />
        <span className="w-[3px] shrink-0" />
        <Tools items={row2} />
      </div>

      <main className="flex min-h-0 flex-1">
        <aside className="w-6 shrink-0 pt-1">
          <button className="flex h-[182px] w-[21px] items-start border-b border-r border-t border-[#a9adb8] bg-gradient-to-r from-[#fff0c0] to-[#fdd878] pt-[2px] font-['Roboto',sans-serif] text-xs text-[#5c5a56] [writing-mode:vertical-rl]">
            Navigátor projektu - Zobrazit
          </button>
        </aside>
        <div className="mr-px mt-px min-w-0 flex-1 border-l border-t border-[#606468] bg-white">
          <Model />
        </div>
      </main>

      <footer className="flex h-[22px] shrink-0 items-center border-t border-[#9ea2ac] bg-gradient-to-b from-[#d4d7df] via-[#b0b5c0] to-[#b8bcc6] pl-1 pt-px font-['Roboto',sans-serif] text-[#20242c]">
        <span>Pracovní rovina</span>
        <span className="ml-auto w-[42px]">31 m</span>
        <span className="w-[74px] border-l border-[#8a8e98] pl-[2px]">Y:&nbsp; 1.824 m</span>
        <span className="w-[90px] border-l border-[#8a8e98] pl-[2px]">Z:&nbsp; 0.000 m</span>
      </footer>

      <Dialog />

      {/* callout from the orthotropy direction cell to both axis systems */}
      <svg className="pointer-events-none absolute inset-0 h-full w-full" fill="none" aria-hidden="true">
        <g transform="translate(-1 -1)" stroke="#ee1c24" strokeWidth="3">
          <rect x="609" y="632" width="85" height="19" />
          <path d="M668 631L388 299M694 631l347-330" />
          <path d="M377 286l17 8-12 10zM1052 290l-18 6 11 11z" fill="#ee1c24" strokeWidth="1" />
        </g>
      </svg>
    </div>
  );
}
